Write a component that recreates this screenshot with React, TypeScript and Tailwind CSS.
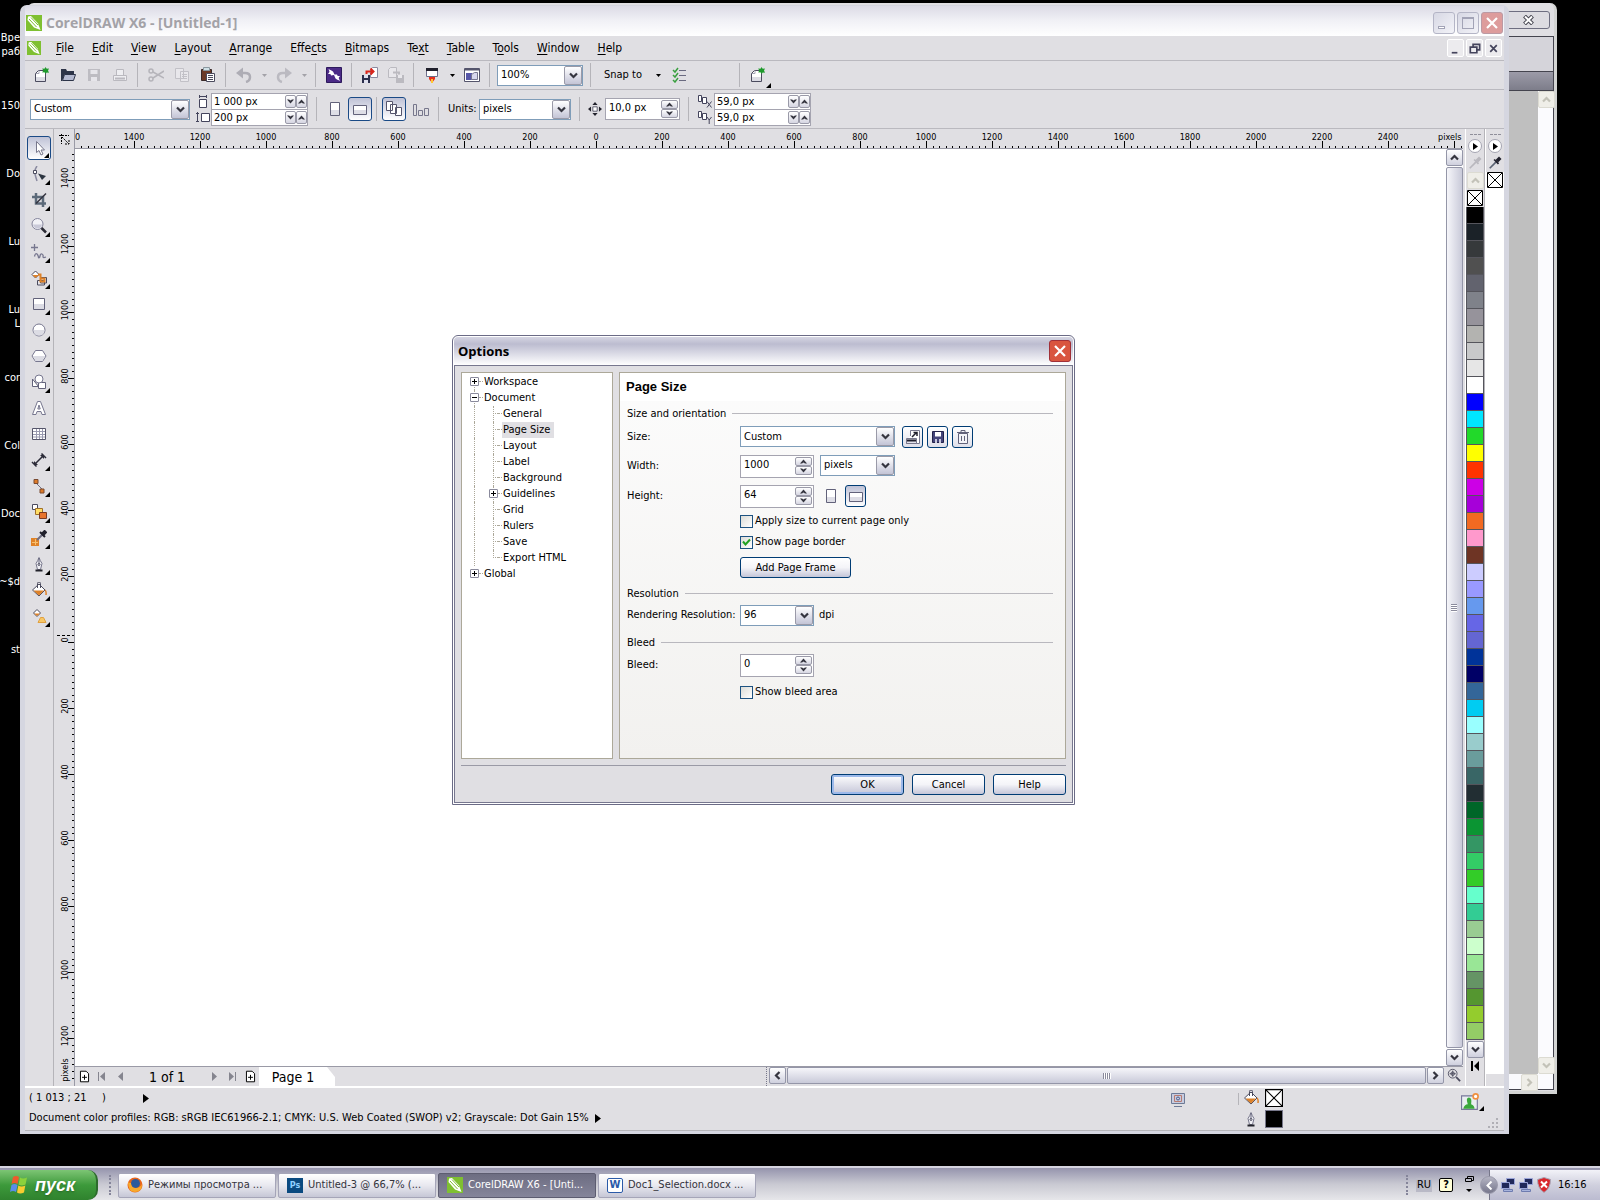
import { clsx } from "clsx";
import type { ReactNode } from "react";

const MENUS: [string, string, string][] = [
	["", "F", "ile"],
	["", "E", "dit"],
	["", "V", "iew"],
	["", "L", "ayout"],
	["", "A", "rrange"],
	["Effe", "c", "ts"],
	["", "B", "itmaps"],
	["Te", "x", "t"],
	["", "T", "able"],
	["T", "o", "ols"],
	["", "W", "indow"],
	["", "H", "elp"],
];

const PALETTE = [
	"#000000", "#1b2228", "#36393b", "#505050", "#62636e", "#7f828a", "#96939b",
	"#b3b3b0", "#c8c9ca", "#e6e6e6", "#ffffff", "#0000ff", "#00e6ff", "#22d92a",
	"#ffff00", "#ff3300", "#cc00e6", "#a600d9", "#f26a22", "#ff99cc", "#6e3424",
	"#ccccff", "#9999ff", "#6699ee", "#6666e6", "#6466d2", "#003399", "#000066",
	"#336699", "#00ccf2", "#99ffff", "#99cccc", "#6a9c9c", "#396666", "#222e33",
	"#006628", "#0b9533", "#349664", "#33cc66", "#33cc28", "#66ffcc", "#33cc94",
	"#99cc92", "#ccffcc", "#99e696", "#659465", "#559630", "#94cc2d", "#94cc66",
];

const DESKTOP_LABELS = [
	["Вре", "раб"],
	["150"],
	["Do"],
	["Lu"],
	["Lu", "L"],
	["cor"],
	["Col"],
	["Doc"],
	["~$d"],
	["st"],
];

const TREE = [
	{ label: "Workspace", level: 0, box: "+" },
	{ label: "Document", level: 0, box: "-" },
	{ label: "General", level: 1 },
	{ label: "Page Size", level: 1, selected: true },
	{ label: "Layout", level: 1 },
	{ label: "Label", level: 1 },
	{ label: "Background", level: 1 },
	{ label: "Guidelines", level: 1, box: "+" },
	{ label: "Grid", level: 1 },
	{ label: "Rulers", level: 1 },
	{ label: "Save", level: 1 },
	{ label: "Export HTML", level: 1 },
	{ label: "Global", level: 0, box: "+" },
];

const Icon = ({ children, size = 16 }: { children: ReactNode; size?: number }) => (
	<svg
		width={size}
		height={size}
		viewBox="0 0 16 16"
		fill="none"
		stroke="#4b4b5e"
		className="shrink-0"
		aria-hidden="true"
	>
		{children}
	</svg>
);

const Chevron = ({ dir = "down", muted = false }: { dir?: string; muted?: boolean }) => (
	<svg width="9" height="9" viewBox="0 0 9 9" fill="none" stroke={muted ? "#c3c2b8" : "#35353f"} strokeWidth="2.2" aria-hidden="true">
		{dir === "down" && <path d="M1 2.5l3.5 3.5L8 2.5" />}
		{dir === "up" && <path d="M1 6.5L4.5 3 8 6.5" />}
		{dir === "left" && <path d="M6.5 1L3 4.5 6.5 8" />}
		{dir === "right" && <path d="M2.5 1L6 4.5 2.5 8" />}
	</svg>
);

const Triangle = ({ dir }: { dir: "up" | "down" }) => (
	<svg width="7" height="5" viewBox="0 0 7 5" fill="#35353f" aria-hidden="true">
		<path d={dir === "up" ? "M0 4.5L3.5 .5 7 4.5H5L3.5 3.6 2 4.5z" : "M0 .5L3.5 4.5 7 .5H5L3.5 1.4 2 .5z"} />
	</svg>
);

const Combo = ({ id, label, value, className }: { id?: string; label?: string; value: string; className: string }) => (
	<div className={clsx("relative h-[21px] border border-[#7f9db9] bg-white", className)}>
		<select id={id} aria-label={label} className="block h-full w-full appearance-none bg-transparent pr-5 pl-[3px] outline-none">
			<option>{value}</option>
		</select>
		<span className="pointer-events-none absolute inset-y-0 right-0 flex w-[18px] items-center justify-center rounded-[2px] border border-[#9a9aa8] bg-linear-to-b from-white to-[#c3c4d6]">
			<Chevron />
		</span>
	</div>
);

const Spin = ({ id, label, value, className }: { id?: string; label?: string; value: string; className: string }) => (
	<div className={clsx("flex items-center border border-[#a5a4b0] bg-white pr-px", className)}>
		<input id={id} aria-label={label} defaultValue={value} className="h-full min-w-0 flex-1 pb-1 pl-[3px] outline-none" />
		<div className="flex flex-col">
			{(["up", "down"] as const).map((dir) => (
				<button
					key={dir}
					type="button"
					aria-label={dir}
					className="flex h-[9px] w-[17px] items-center justify-center rounded-[2px] border border-[#9a9aa8] bg-linear-to-b from-white to-[#d6d6e2]"
				>
					<Triangle dir={dir} />
				</button>
			))}
		</div>
	</div>
);

const FlatSpin = ({ label, value }: { label: string; value: string }) => (
	<div className="flex h-[17px] w-[97px] items-center border border-[#a5a4b0] bg-white">
		<input aria-label={label} defaultValue={value} className="h-full min-w-0 flex-1 pl-[2px] outline-none" />
		{(["down", "up"] as const).map((dir) => (
			<button
				key={dir}
				type="button"
				aria-label={dir}
				className="flex h-[13px] w-[11px] items-center justify-center rounded-[2px] border border-[#9a9aa8] bg-linear-to-b from-white to-[#d6d6e2]"
			>
				<Triangle dir={dir} />
			</button>
		))}
	</div>
);

const Sep = () => <div className="mr-[5px] ml-1 h-6 w-px shrink-0 bg-[#b5b4b9]" />;

const Tool = ({ label, children }: { label: string; children: ReactNode }) => (
	<button type="button" aria-label={label} className="flex h-[26px] w-[26px] shrink-0 items-center justify-center">
		{children}
	</button>
);

const Caret = ({ muted = false }: { muted?: boolean }) => (
	<button type="button" aria-label="More" className="flex h-6 w-[14px] shrink-0 items-center justify-center">
		<svg width="5" height="3" viewBox="0 0 5 3" fill={muted ? "#a3a2a8" : "#000"} aria-hidden="true">
			<path d="M0 0h5L2.5 3z" />
		</svg>
	</button>
);

const CorelLogo = ({ size }: { size: number }) => (
	<svg width={size} height={size} viewBox="0 0 16 16" className="shrink-0" aria-hidden="true">
		<path fill="#7fc031" d="M0 0h16v16H0z" />
		<path fill="#fff" d="M2 1.5l3-.5 7 7.5L14.5 15 8 12.500 1.500 5z" />
		<path stroke="#7fc031" strokeWidth="1" d="M3 4l7.500 8M5 2.500l7 7.500" />
	</svg>
);

const NewDoc = () => (
	<Icon>
		<path fill="#fff" d="M1.500 14.500V6.500l3-3h7v11z" />
		<path fill="#dcdce4" stroke="none" d="M2 10h9v4H2z" />
		<path stroke="#a5a5b4" d="M2 6.500h3v-3" />
		<path fill="#1f9a2c" stroke="none" d="M11.500 0l1.200 1.800L15 1.500l-1 2 1 2.200-2.300-.3L11.500 7l-1-1.800-2.300.3 1-2-1-2 2.300.3z" />
	</Icon>
);

const Portrait = ({ wide = false }: { wide?: boolean }) => (
	<Icon>
		{wide ? (
			<>
				<path fill="#fff" stroke="#62627a" d="M1.500 4.500h13v9h-13z" />
				<path fill="#dedee6" stroke="none" d="M2 9h12v4H2z" />
			</>
		) : (
			<>
				<path fill="#fff" stroke="#62627a" d="M3.500 1.500h9v13h-9z" />
				<path fill="#dedee6" stroke="none" d="M4 9h8v5H4z" />
			</>
		)}
	</Icon>
);

const Bucket = () => (
	<Icon>
		<path fill="#fff" d="M8 2l6 6-6 6-6.500-6z" />
		<path fill="#dd8128" stroke="none" d="M2.500 8.500h10.500L8 13.500z" />
		<path d="M6.500 6V1.500a1.500 1.500 0 013 0V6" />
		<path stroke="#dd8128" strokeWidth="1.500" d="M14 8q1.500 1 1 5" />
	</Icon>
);

const Pen = () => (
	<Icon>
		<path fill="#f1f1f6" stroke="#77778c" d="M8 1.500q-1 3-3 6l1.500 6h3l1.500-6q-2-3-3-6z" />
		<path stroke="#62627a" d="M8 2v6" />
		<circle cx="8" cy="8.500" r="1" />
		<path stroke="#22222b" strokeWidth="2" d="M4.500 14.500h7" />
	</Icon>
);

const Dropper = ({ muted = false }: { muted?: boolean }) => (
	<Icon size={14}>
		<path stroke={muted ? "#b9b8be" : "#5c6474"} strokeWidth="2" d="M2 14l7-7" />
		<path stroke={muted ? "#b9b8be" : "#20202c"} strokeWidth="4" d="M10 6l4-4" />
		<path stroke={muted ? "#b9b8be" : "#20202c"} strokeWidth="2" d="M7 4l5 5" />
	</Icon>
);

const TOOLBOX: { name: string; flyout?: boolean; icon: ReactNode }[] = [
	{ name: "Pick", flyout: true, icon: <path fill="#fff" stroke="#77778c" d="M5.500 1.500v11l2.500-2 2 4.500 2-1-2-4h3.500z" /> },
	{
		name: "Shape", flyout: true, icon: (
			<>
				<path stroke="#8a8aa0" strokeWidth="1.500" d="M6 0Q3 4 4 8t2 7" />
				<path fill="#fff" d="M2.500 4.500h3v3h-3z" />
				<path fill="#2c3440" stroke="none" d="M7 7.500l8 2.500-4 4z" />
			</>
		),
	},
	{
		name: "Crop", flyout: true, icon: (
			<>
				<path stroke="#5c6a7a" strokeWidth="2.500" d="M1 5h11v10M5 1v10.500h10" />
				<path stroke="#33333f" strokeWidth="1.500" d="M5 11.500L15 1.500" />
			</>
		),
	},
	{
		name: "Zoom", flyout: true, icon: (
			<>
				<circle cx="6.500" cy="6" r="5.500" fill="#f1f1f6" stroke="#85859c" />
				<path stroke="none" fill="#c9c9d8" d="M2 6.500h9q-1 4-4.500 4T2 6.500z" />
				<path stroke="#2b2b35" strokeWidth="2.500" d="M10.500 10l4.500 4.500" />
			</>
		),
	},
	{ name: "Freehand", flyout: true, icon: <path stroke="#77778f" strokeWidth="1.300" d="M3.500 0v7M0 3.500h7M3.500 12.500q1-4 2.500-2.500t1.500 3.500q1 1 1.500-1.500t2-2 1 3q.5 1 3 0" /> },
	{
		name: "Smart Fill", flyout: true, icon: (
			<>
				<path fill="#fff" d="M4.500 1l3.500 3.500-3.500 3.500L1 4.500z" />
				<path fill="#dd8128" stroke="none" d="M1.500 5h6.500l-3.500 3z" />
				<path fill="#e4e4ea" d="M6.500 10.500h7v4.500h-7zM9.500 7.500h6v5.500h-6z" />
				<path stroke="#dd8128" strokeWidth="2" d="M7 4.500h2.500v7h4v-3h-3" />
			</>
		),
	},
	{
		name: "Rectangle", flyout: true, icon: (
			<>
				<path fill="#fff" stroke="#62627a" d="M2.500 2.500h11v11h-11z" />
				<path fill="#dcdce4" stroke="none" d="M3 8h10v5H3z" />
			</>
		),
	},
	{
		name: "Ellipse", flyout: true, icon: (
			<>
				<circle cx="8" cy="8" r="6" fill="#fff" stroke="#77778f" />
				<path fill="#dcdce4" stroke="none" d="M2.500 8h11q0 5.500-5.500 5.500T2.500 8z" />
			</>
		),
	},
	{
		name: "Polygon", flyout: true, icon: (
			<>
				<path fill="#fff" stroke="#77778f" d="M4.500 2.500h7L15 8l-3.500 5.500h-7L1 8z" />
				<path fill="#dcdce4" stroke="none" d="M1.800 8h12.400l-3 5h-6.400z" />
			</>
		),
	},
	{
		name: "Basic Shapes", flyout: true, icon: (
			<>
				<path fill="#fff" stroke="#62627a" d="M1.500 5v7.500h6zM7.500 8.500h7v6h-7z" />
				<circle cx="8" cy="5" r="4" fill="#fff" stroke="#77778f" />
			</>
		),
	},
	{ name: "Text", icon: <path fill="#fff" stroke="#77778f" d="M6.500 1.500h3l5 13h-3.500l-1-3h-4l-1 3H1.500zM8 5l-1.200 4h2.400z" /> },
	{
		name: "Table", icon: (
			<>
				<path fill="#fff" stroke="#55556a" d="M1.500 2.500h13v11h-13z" />
				<path stroke="#9a9ab0" d="M2 5.500h12M2 8.500h12M2 11h12M5.500 3v10M8.500 3v10M11.500 3v10" />
			</>
		),
	},
	{
		name: "Dimension", flyout: true, icon: (
			<>
				<path stroke="#2b2b38" strokeWidth="1.500" d="M4 12L12 4M1 10l4.500 4.500M10.500 1.500L15 6" />
				<path fill="#2b2b38" stroke="none" d="M3 13V9l4 4zM13 3v4L9 3z" />
			</>
		),
	},
	{
		name: "Connector", flyout: true, icon: (
			<>
				<path stroke="#6e6e84" d="M4 4l8 8" />
				<path fill="#dd7a28" stroke="#7a4a30" d="M3 1.500h4v4H3zM9 11h4v4H9z" />
			</>
		),
	},
	{
		name: "Blend", flyout: true, icon: (
			<>
				<path fill="#fff" d="M1.500.500h5v5h-5z" />
				<path fill="#ffdd66" stroke="#a07028" d="M4.500 4.500h7v6h-7z" />
				<path fill="#e8742c" stroke="#7a3a20" d="M8.500 8.500h7v6h-7z" />
			</>
		),
	},
	{
		name: "Eyedropper", flyout: true, icon: (
			<>
				<path fill="#e08328" stroke="none" d="M0 8h8v8H0z" />
				<path stroke="#f8c070" d="M1 12.500h6M4.500 9v6" />
				<path stroke="#6e6e84" strokeWidth="2" d="M6 10l5-5" />
				<path stroke="#20202c" strokeWidth="4" d="M11 5l4-4" />
				<path stroke="#20202c" strokeWidth="2" d="M9 2l5 5" />
			</>
		),
	},
	{ name: "Outline Pen", flyout: true, icon: <Pen /> },
	{ name: "Fill", flyout: true, icon: <Bucket /> },
	{
		name: "Interactive Fill", flyout: true, icon: (
			<>
				<path fill="#fff" d="M6 1.500L9.500 5 6 8.500 2.500 5z" />
				<path fill="#dd8128" stroke="none" d="M3 5.500h6L6 8z" />
				<path fill="#f7c766" stroke="#e0a040" d="M9.500 9.500h3l2.500 5H7z" />
			</>
		),
	},
];

// 200 document units take 66px on screen
const STEP = 6.6;

const HorizontalRuler = () => {
	const origin = 521;
	const ticks = Array.from({ length: 400 }, (_, i) => i - 78);
	return (
		<svg width="100%" height="20" className="block shrink-0 overflow-hidden border-b border-[#9a9aa6] text-[9px]" aria-label="Horizontal ruler">
			{ticks.map((i) => {
				const x = Math.round(origin + i * STEP);
				if (x > 1386) return null;
				return <path key={i} stroke="#000" shapeRendering="crispEdges" d={`M${x}.5 ${i % 10 === 0 ? 12 : 17}V19`} />;
			})}
			<text x="0" y="11">0</text>
			{ticks
				.filter((i) => i % 10 === 0 && i >= -70 && i <= 120)
				.map((i) => (
					<text key={i} x={origin + i * STEP} y="11" textAnchor="middle">
						{Math.abs(i) * 20}
					</text>
				))}
			<text x="1363" y="11">pixels</text>
		</svg>
	);
};

const VerticalRuler = () => {
	const origin = 493;
	const ticks = Array.from({ length: 141 }, (_, i) => i - 74);
	return (
		<svg width="20" height="100%" className="absolute inset-0 text-[9px]" aria-label="Vertical ruler">
			{ticks.map((i) => {
				const y = Math.round(origin + i * STEP);
				return <path key={i} stroke="#000" shapeRendering="crispEdges" d={`M${i % 10 === 0 ? 14 : 18} ${y}.5H20`} />;
			})}
			<path stroke="#000" strokeDasharray="3 2" shapeRendering="crispEdges" d="M3 486.500h17" />
			{ticks
				.filter((i) => i % 10 === 0 && i >= -70 && i <= 60)
				.map((i) => {
					const y = origin - 2 + i * STEP;
					return (
						<text key={i} x="14" y={y} textAnchor="middle" transform={`rotate(-90 14 ${y})`}>
							{Math.abs(i) * 20}
						</text>
					);
				})}
			<text x="14" y="921" textAnchor="middle" transform="rotate(-90 14 921)">pixels</text>
		</svg>
	);
};

const ScrollButton = ({ dir, muted = false }: { dir: string; muted?: boolean }) => (
	<button
		type="button"
		aria-label={`Scroll ${dir}`}
		className={clsx(
			"flex h-[17px] w-[17px] shrink-0 items-center justify-center rounded-[2px] border",
			muted ? "border-[#dcdbd2] bg-[#efeee8]" : "border-[#9496a8] bg-linear-to-b from-white to-[#cfd0de]",
		)}
	>
		<Chevron dir={dir} muted={muted} />
	</button>
);

const NoColor = ({ size = 16 }: { size?: number }) => (
	<svg width={size} height={size} viewBox="0 0 16 16" className="shrink-0 bg-white" aria-hidden="true">
		<path fill="none" stroke="#000" d="M.500.500h15v15H.500zM1 1l14 14M15 1L1 15" />
	</svg>
);

const PaletteHead = ({ muted = false }: { muted?: boolean }) => (
	<>
		<div className="mt-[5px] w-[11px] border-t border-dashed border-[#8f8f9a]" />
		<button type="button" aria-label="Palette menu" className="mt-1 flex h-[14px] w-[14px] items-center justify-center rounded-full border border-[#a5a5b2] bg-white">
			<svg width="5" height="7" viewBox="0 0 5 7" aria-hidden="true">
				<path d="M0 0l5 3.500L0 7z" />
			</svg>
		</button>
		<div className="mt-[3px]">
			<Dropper muted={muted} />
		</div>
	</>
);

const TitleBar = () => (
	<header className="flex h-[30px] shrink-0 items-center bg-linear-to-b from-[#dcdbe6] via-[#f1f1f6] to-white pt-[3px] pr-px pl-[1px]">
		<CorelLogo size={16} />
		<h1 className="ml-1 flex-1 font-['Open_Sans','Noto_Sans',sans-serif] text-[14px] font-bold text-[#a3a2a7]">
			CorelDRAW X6 - [Untitled-1]
		</h1>
		<div className="flex gap-[2px]">
			<button type="button" aria-label="Minimize" className="flex h-[22px] w-[22px] rounded-[3px] border border-[#b4b5c6] bg-linear-to-br from-[#d7d8e4] to-[#f3f3f8]">
				<span className="mt-[13px] ml-1 h-[3px] w-[7px] border border-[#a2a3b6] bg-white" />
			</button>
			<button type="button" aria-label="Maximize" className="flex h-[22px] w-[22px] items-center justify-center rounded-[3px] border border-[#b4b5c6] bg-linear-to-br from-[#d7d8e4] to-[#f3f3f8]">
				<span className="h-3 w-3 border border-t-2 border-[#a2a3b6]" />
			</button>
			<button type="button" aria-label="Close" className="flex h-[22px] w-[22px] items-center justify-center rounded-[3px] border border-[#bb9aa4] bg-[#dd9c9c]">
				<svg width="12" height="12" viewBox="0 0 12 12" stroke="#fff" strokeWidth="2.200" aria-hidden="true">
					<path d="M1 1l10 10M11 1L1 11" />
				</svg>
			</button>
		</div>
	</header>
);

const MenuBar = () => (
	<nav className="flex h-[25px] shrink-0 items-center border-b border-[#bab9bf] pr-[2px] pl-[2px] text-[12px]">
		<CorelLogo size={14} />
		<div className="ml-[6px] flex flex-1">
			{MENUS.map(([before, key, after]) => (
				<button key={before + key + after} type="button" className="px-[9px]">
					{before}
					<span className="underline underline-offset-2">{key}</span>
					{after}
				</button>
			))}
		</div>
		<div className="flex gap-[2px]">
			{["M4 12.500h6", "M6.500 6.500v-3h7v6h-3M3.500 6.500h7v6h-7z", "M4.500 4.500l7 7M11.500 4.500l-7 7"].map((d) => (
				<button key={d} type="button" aria-label="Document window" className="flex h-[18px] w-[17px] items-center justify-center rounded-[2px] border border-white bg-[#ecebee]">
					<Icon size={15}>
						<path stroke="#44445c" strokeWidth="1.800" d={d} />
					</Icon>
				</button>
			))}
		</div>
	</nav>
);

const StandardToolbar = () => (
	<div className="flex h-[29px] shrink-0 items-center border-b border-[#bab9bf] pl-1">
		<Tool label="New"><NewDoc /></Tool>
		<Tool label="Open">
			<Icon>
				<path fill="#2d3448" stroke="none" d="M1 2h5l1 2h7v3H5L2 14H1z" />
				<path fill="#b4b9d0" stroke="#2d3448" d="M4.500 7.500h11l-2 6h-11z" />
			</Icon>
		</Tool>
		<Tool label="Save">
			<Icon>
				<path fill="#bdbcc2" stroke="none" d="M2 2h12v12H2z" />
				<path fill="#e6e5ea" stroke="none" d="M4.500 3h7v4h-7zM5 10h6v4H5z" />
			</Icon>
		</Tool>
		<Tool label="Print">
			<Icon>
				<path stroke="#bab9bf" fill="#eeeef1" d="M4.500 8V2.500h7V8M1.500 8.500h13v5h-13z" />
				<path stroke="#bab9bf" strokeWidth="2" d="M3 11.500h10" />
			</Icon>
		</Tool>
		<Sep />
		<Tool label="Cut">
			<Icon>
				<path stroke="#b5b4ba" strokeWidth="1.500" d="M5 5l11 6M5 11l11-7" />
				<circle cx="3" cy="4" r="2" stroke="#b5b4ba" strokeWidth="1.500" />
				<circle cx="3" cy="12" r="2" stroke="#b5b4ba" strokeWidth="1.500" />
			</Icon>
		</Tool>
		<Tool label="Copy">
			<Icon>
				<path stroke="#c2c1c7" fill="#e8e7eb" d="M1.500 1.500h8v10h-8zM6.500 4.500h8v10h-8z" />
				<path stroke="#c2c1c7" d="M8 7.500h5M8 9.500h5M8 11.500h5" />
			</Icon>
		</Tool>
		<Tool label="Paste">
			<Icon>
				<path fill="#6b3a28" stroke="#3a2a2a" d="M1.500 2.500h10v11h-10z" />
				<path fill="#cfe0e6" stroke="#8a98a0" d="M3.500.500h6v3h-6z" />
				<path fill="#fff" d="M6.500 6.500h8v8h-8z" />
				<path d="M8 8.500h5M8 10.500h5M8 12.500h5" />
			</Icon>
		</Tool>
		<Sep />
		<Tool label="Undo">
			<Icon>
				<path stroke="#aeadb5" strokeWidth="2.500" d="M3 6h6q5 0 5 4t-4 5" />
				<path fill="#aeadb5" stroke="none" d="M0 6l7-5.500v11z" />
			</Icon>
		</Tool>
		<Caret muted />
		<Tool label="Redo">
			<Icon>
				<path stroke="#bbbac1" strokeWidth="2.500" d="M13 6H7q-5 0-5 4t4 5" />
				<path fill="#bbbac1" stroke="none" d="M16 6L9 .500v11z" />
			</Icon>
		</Tool>
		<Caret muted />
		<Sep />
		<Tool label="Connect">
			<Icon>
				<path fill="#4b2a86" stroke="#2d1a5c" d="M.500.500h15v15H.500z" />
				<path fill="#fff" stroke="none" d="M2.500 2l4.500 2.500 1.500 3 2.500 0 3 6.500-4.500-2.500-1.500-3.500-3 .5z" />
				<path fill="#fff" stroke="none" d="M2 7l4 0-1-4zM14 9l-4 0 1 4z" />
			</Icon>
		</Tool>
		<Sep />
		<Tool label="Import">
			<Icon>
				<path fill="#fff" stroke="#8a8aa0" d="M8.500 10.500v-8l2-2h5v10z" />
				<path fill="#2b2f4c" stroke="none" d="M0 8h8v8H0z" />
				<path fill="#dfe0ee" stroke="none" d="M2 8h4v3H2zM2 13h4v3H2z" />
				<path stroke="#d8261c" strokeWidth="2" d="M4.500 7V4.500H11M8.500 1.500l3 3-3 3" />
			</Icon>
		</Tool>
		<Tool label="Export">
			<Icon>
				<path fill="#e8e7eb" stroke="#bbbac0" d="M.500 10.500v-8l2-2h6v10z" />
				<path fill="#bbbac0" stroke="none" d="M8 8h8v8H8z" />
				<path fill="#e8e7eb" stroke="none" d="M10 8h4v3h-4z" />
				<path stroke="#bbbac0" strokeWidth="2" d="M5 5.500h6v2" />
			</Icon>
		</Tool>
		<Sep />
		<Tool label="Publish">
			<Icon>
				<path fill="#fff" stroke="#6e6e8a" d="M2.500 1.500h11v8h-11z" />
				<path stroke="#20202c" strokeWidth="3" d="M2 2.500h12" />
				<path fill="#e8321c" stroke="none" d="M5 10h6v2l-3 4-3-4z" />
				<path fill="#ffc832" stroke="none" d="M7 12h2v4H7z" />
			</Icon>
		</Tool>
		<Caret />
		<Tool label="Welcome screen">
			<Icon>
				<path fill="#fff" stroke="#55556c" d="M.500 1.500h15v13H.500z" />
				<path stroke="#55556c" strokeWidth="2" d="M1 2.500h14" />
				<path fill="#5656a8" stroke="none" d="M2 6h6v7H2z" />
				<path fill="#d8d8ee" stroke="#77778f" d="M7.500 7.500l3-2h3v7h-6z" />
			</Icon>
		</Tool>
		<Sep />
		<Combo label="Zoom levels" value="100%" className="ml-[2px] w-[86px]" />
		<div className="ml-[3px]"><Sep /></div>
		<button type="button" className="ml-1 h-6 px-1">Snap to</button>
		<div className="ml-[6px]"><Caret /></div>
		<Tool label="Snap options">
			<Icon>
				<path stroke="#6a6a80" d="M8 3.500h7M8 8.500h7M8 13.500h7" />
				<path stroke="#3aa040" strokeWidth="1.500" d="M2 3l2 2 3-4M2 8l2 2 3-4M2 13l2 2 3-4" />
			</Icon>
		</Tool>
		<div className="ml-[43px]"><Sep /></div>
		<div className="relative">
			<Tool label="New from template"><NewDoc /></Tool>
			<svg width="5" height="5" className="absolute right-0 bottom-0" aria-hidden="true"><path d="M5 0v5H0z" /></svg>
		</div>
	</div>
);

const PROP_BUTTON = "flex h-6 w-6 shrink-0 items-center justify-center rounded-[3px] border border-[#1a4a86] bg-linear-to-b from-[#bfc2d6] to-white";

const DupIcon = ({ axis }: { axis: string }) => (
	<svg width="14" height="13" viewBox="0 0 14 13" fill="#fff" stroke="#44445c" aria-hidden="true">
		<path d="M.500.500h3v6h-3zM4.500 2.500h4v6h-4z" />
		<path fill="none" d={axis === "x" ? "M9 6.500l4.500 6M13.500 6.500l-4.500 6" : "M9 6l2.200 3L13.500 6M11.200 9v4"} />
	</svg>
);

const PropertyBar = () => (
	<div className="flex h-[39px] shrink-0 items-center border-b border-[#bab9bf] pl-[5px]">
		<Combo label="Paper type" value="Custom" className="w-[160px]" />
		<div className="ml-[6px] flex w-[14px] flex-col gap-[3px]">
			<svg width="14" height="13" viewBox="0 0 14 13" fill="#fff" stroke="#44445c" aria-hidden="true">
				<path d="M3.500 4.500h7v8h-7zM3.500 1.500h7M3.500 0v3M10.500 0v3" />
			</svg>
			<svg width="14" height="12" viewBox="0 0 14 12" fill="#fff" stroke="#44445c" aria-hidden="true">
				<path d="M5.500 2.500h8v8h-8zM1.500 1v10M0 2.500h3M0 10.500h3" />
			</svg>
		</div>
		<div className="ml-px flex flex-col -space-y-px">
			<FlatSpin label="Page width" value="1 000 px" />
			<FlatSpin label="Page height" value="200 px" />
		</div>
		<div className="ml-1"><Sep /></div>
		<Tool label="Portrait"><Portrait /></Tool>
		<button type="button" aria-label="Landscape" className={PROP_BUTTON}><Portrait wide /></button>
		<Sep />
		<button type="button" aria-label="All pages" className={PROP_BUTTON}>
			<Icon>
				<path fill="#fff" stroke="#55556c" d="M.500.500h6v9h-6zM4.500 3.500h6v9h-6zM9.500 6.500h6v8h-6z" />
			</Icon>
		</button>
		<div className="ml-[2px]">
			<Tool label="Current page">
				<Icon>
					<path stroke="#77778c" d="M.500 3.500h3v11h-3zM5.500 9.500h4v5h-4zM11.500 7.500h4v7h-4z" />
				</Icon>
			</Tool>
		</div>
		<Sep />
		<label htmlFor="units" className="ml-1 w-[31px]">Units:</label>
		<Combo id="units" value="pixels" className="w-[92px]" />
		<div className="ml-1"><Sep /></div>
		<div className="mx-[3px]">
			<Icon size={14}>
				<path d="M5.500 5.500h5v5h-5z" fill="#fff" />
				<path fill="#22222c" stroke="none" d="M8 0l3 3.500H5zM8 16l3-3.500H5zM0 8l3.500-3v6zM16 8l-3.500-3v6z" />
			</Icon>
		</div>
		<Spin label="Nudge distance" value="10,0 px" className="h-[22px] w-[75px]" />
		<div className="ml-1"><Sep /></div>
		<div className="ml-[4px] flex w-[16px] flex-col gap-[3px]">
			<DupIcon axis="x" />
			<DupIcon axis="y" />
		</div>
		<div className="flex flex-col -space-y-px">
			<FlatSpin label="Duplicate distance x" value="59,0 px" />
			<FlatSpin label="Duplicate distance y" value="59,0 px" />
		</div>
	</div>
);

const PAGE_NAV = "flex h-[18px] w-[18px] items-center justify-center";

const PageBar = () => (
	<div className="flex h-5 shrink-0 border-t border-[#9a9aa6]">
		<div className="flex w-[688px] items-center">
			<button type="button" aria-label="Add page before" className={PAGE_NAV}>
				<Icon size={13}><path fill="#fff" stroke="#000" strokeWidth="1.200" d="M3 1.500h7l3 3v10H3zM5 9h6M8 6v6" /></Icon>
			</button>
			<button type="button" aria-label="First page" className={PAGE_NAV}>
				<svg width="8" height="9" fill="#85858f" aria-hidden="true"><path d="M0 0h1v9H0zM7 0v9L2 4.500z" /></svg>
			</button>
			<button type="button" aria-label="Previous page" className={PAGE_NAV}>
				<svg width="5" height="9" fill="#85858f" aria-hidden="true"><path d="M5 0v9L0 4.500z" /></svg>
			</button>
			<span className="w-[76px] text-center text-[14px]">1 of 1</span>
			<button type="button" aria-label="Next page" className={PAGE_NAV}>
				<svg width="5" height="9" fill="#85858f" aria-hidden="true"><path d="M0 0v9l5-4.500z" /></svg>
			</button>
			<button type="button" aria-label="Last page" className={PAGE_NAV}>
				<svg width="8" height="9" fill="#85858f" aria-hidden="true"><path d="M7 0h1v9H7zM1 0v9l5-4.500z" /></svg>
			</button>
			<button type="button" aria-label="Add page after" className={PAGE_NAV}>
				<Icon size={13}><path fill="#fff" stroke="#000" strokeWidth="1.200" d="M3 1.500h7l3 3v10H3zM5 9h6M8 6v6" /></Icon>
			</button>
			<button type="button" className="h-full w-[76px] bg-white pr-2 text-center text-[14px] leading-[18px] [clip-path:polygon(0_0,68px_0,100%_10px,100%_100%,0_100%)]">
				Page 1
			</button>
		</div>
		<div className="mr-[2px] w-1 border-r border-dotted border-[#77778a]" />
		<ScrollButton dir="left" />
		<div className="mx-px flex h-[17px] flex-1 items-center justify-center rounded-[2px] border border-[#9496a8] bg-linear-to-b from-[#f6f6fa] to-[#c9cad9]">
			<span className="h-[6px] w-2 bg-[repeating-linear-gradient(90deg,#8a8a9c_0_1px,#fff_1px_2px)]" />
		</div>
		<ScrollButton dir="right" />
		<div className="flex w-[19px] justify-center pt-px">
			<Icon size={14}>
				<circle cx="6.500" cy="6.500" r="5" />
				<circle cx="6.500" cy="6.500" r="2" />
				<path d="M6.500 3v7M3 6.500h7" />
				<path strokeWidth="2" d="M10.500 10.500l4.500 4.500" />
			</Icon>
		</div>
	</div>
);

const StatusBar = () => (
	<footer className="flex h-[45px] shrink-0 border-t-2 border-b border-white border-b-[#b5b4b9]">
		<div className="flex-1 pl-1">
			<p className="flex h-5 items-center">
				<span className="w-[73px]">( 1 013 ; 21</span>
				<span className="w-[41px]">)</span>
				<svg width="6" height="9" aria-hidden="true"><path d="M0 0v9l6-4.500z" /></svg>
			</p>
			<p className="flex h-5 items-center gap-[6px]">
				Document color profiles: RGB: sRGB IEC61966-2.1; CMYK: U.S. Web Coated (SWOP) v2; Grayscale: Dot Gain 15%
				<svg width="6" height="9" aria-hidden="true"><path d="M0 0v9l6-4.500z" /></svg>
			</p>
		</div>
		<div className="w-[68px] pt-1">
			<Icon>
				<path fill="#c7cce0" stroke="#6d7a96" d="M1.500 1.500h13v10h-13z" />
				<path stroke="#b87a70" d="M4.500 3.500h7v6h-7z" />
				<circle cx="8" cy="6.500" r="1.500" stroke="#4a5a8a" />
				<path stroke="#6d7a96" d="M4 14.500h8" />
			</Icon>
		</div>
		<div className="mt-[5px] h-3 w-[5px] border-l border-[#b5b4b9]" />
		<div className="flex flex-col gap-[5px] pt-[2px]">
			<Bucket />
			<Pen />
		</div>
		<div className="ml-[6px] flex w-[196px] flex-col gap-[3px] pt-px">
			<NoColor size={18} />
			<span className="h-[18px] w-[18px] border border-[#77778a] bg-black" />
		</div>
		<div className="relative flex w-[43px] items-start pt-[5px]">
			<Icon size={18}>
				<path fill="#e8eef0" stroke="#77779a" d="M.500 2.500h14v12H.500z" />
				<path fill="#3aa83c" stroke="none" d="M2 14q1-4 4-4-2-6 1-6t2 6q3 1 3 4z" />
				<circle cx="13" cy="3" r="2.200" fill="#fff" stroke="#f09040" strokeWidth="1.500" />
			</Icon>
			<svg width="5" height="5" className="mt-[13px]" aria-hidden="true"><path d="M5 0v5H0z" /></svg>
			<svg width="12" height="12" className="absolute right-1 bottom-0" fill="#b0afb5" aria-hidden="true">
				<path d="M8 0h2v2H8zM4 4h2v2H4zM8 4h2v2H8zM0 8h2v2H0zM4 8h2v2H4zM8 8h2v2H8z" />
			</svg>
		</div>
	</footer>
);

const OptionsTree = () => (
	<ul className="w-[152px] shrink-0 border border-[#aca899] bg-white pt-px pl-2">
		{TREE.map(({ label, level, box, selected }, i) => (
			<li key={label} className="relative flex h-4 items-center">
				{/* dotted guide lines */}
				{i < TREE.length - 1 && <span className={clsx("absolute left-1 border-l border-dotted border-[#aca899]", i === 0 ? "top-2 h-2" : "h-4")} />}
				{level === 1 && <span className={clsx("absolute top-0 left-[23px] border-l border-dotted border-[#aca899]", label === "Export HTML" ? "h-2" : "h-4")} />}
				{level === 1 && <span className="w-[19px]" />}
				<span className="relative flex h-[9px] w-[9px] items-center justify-center">
					{box ? (
						<svg width="9" height="9" fill="#fff" stroke="#8a8a9c" className="rounded-[1px]" aria-hidden="true">
							<path d="M.5.5h8v8h-8z" />
							<path stroke="#000" d={box === "+" ? "M2 4.5h5M4.5 2v5" : "M2 4.5h5"} />
						</svg>
					) : (
						<span className="ml-1 w-full border-t border-dotted border-[#aca899]" />
					)}
				</span>
				<span className="w-1 border-t border-dotted border-[#aca899]" />
				<button type="button" className={clsx("h-4 pr-1 pl-px whitespace-nowrap", selected && "bg-[#e0dfe3]")}>
					{label}
				</button>
			</li>
		))}
	</ul>
);

const GroupTitle = ({ children }: { children: string }) => (
	<h3 className="mr-3 flex h-4 items-center gap-[6px]">
		{children}
		<span className="h-px flex-1 bg-[#b9b8be]" />
	</h3>
);

const Check = ({ id, label, checked = false }: { id: string; label: string; checked?: boolean }) => (
	<div className="ml-[113px] flex h-[21px] items-center gap-[2px]">
		<span className="relative h-[13px] w-[13px]">
			<input
				id={id}
				type="checkbox"
				defaultChecked={checked}
				className="peer block h-[13px] w-[13px] appearance-none border border-[#1d5281] bg-linear-to-br from-[#dcdcd7] to-white"
			/>
			<svg width="9" height="9" className="pointer-events-none absolute top-[2px] left-[2px] hidden peer-checked:block" fill="none" stroke="#21a121" strokeWidth="2" aria-hidden="true">
				<path d="M1 3.500l2.500 3L8 1.500" />
			</svg>
		</span>
		<label htmlFor={id}>{label}</label>
	</div>
);

const PUSH = "h-[21px] rounded-[3px] border border-[#003c74] bg-linear-to-b from-white via-[#f4f4f8] to-[#c5c6d8] pt-px";
const ICON_PUSH = "flex h-[22px] w-[21px] items-center justify-center rounded-[3px] border border-[#003c74] bg-linear-to-b from-white to-[#dfe0ea]";

const OptionsDialog = () => (
	<section
		role="dialog"
		aria-label="Options"
		className="flex h-[470px] w-[623px] flex-col rounded-t-[6px] border border-[#6b6b86] bg-white p-px"
	>
		<header className="flex h-[28px] shrink-0 items-center rounded-t-[4px] bg-linear-to-b from-[#d5d5e2] via-[#bcbcd0] via-25% to-white pt-px pr-[2px] pl-1">
			<h2 className="flex-1 font-['Open_Sans','Noto_Sans',sans-serif] text-[13px] font-bold">Options</h2>
			<button type="button" aria-label="Close" className="flex h-[22px] w-[22px] items-center justify-center rounded-[3px] border border-[#a03038] bg-[#d9553f]">
				<svg width="12" height="12" viewBox="0 0 12 12" stroke="#fff" strokeWidth="2.200" aria-hidden="true">
					<path d="M1 1l10 10M11 1L1 11" />
				</svg>
			</button>
		</header>
		<div className="flex flex-1 flex-col border border-[#77778f] bg-[#e0dfe3] px-[6px]">
			<div className="mt-[6px] flex flex-1 gap-[6px]">
				<OptionsTree />
				<div className="flex-1 border border-[#aca899] bg-linear-to-b from-[#fcfcfc] to-[#f2f1ef]">
					<h2 className="flex h-[28px] items-center bg-white pt-px pl-[6px] font-['Liberation_Sans',Arial,sans-serif] text-[13px] font-bold">
						Page Size
					</h2>
					<form className="pt-[5px] pl-[7px]" onSubmit={(e) => e.preventDefault()}>
						<GroupTitle>Size and orientation</GroupTitle>
						<div className="mt-1 flex h-[22px] items-center">
							<label htmlFor="size" className="w-[113px]">Size:</label>
							<Combo id="size" value="Custom" className="w-[155px]" />
							<div className="ml-[7px] flex gap-1">
								<button type="button" aria-label="Page size from printer" className={ICON_PUSH}>
									<Icon>
										<path fill="#fff" stroke="#77778c" d="M5.500 7V1.500h9v13h-13v-4.500" />
										<path fill="#e4e4ee" stroke="#77778c" d="M1.500 9.500h10v5h-10z" />
										<path stroke="#20202c" strokeWidth="2" d="M2 11.500h9" />
										<path stroke="#20202c" strokeWidth="1.500" d="M7 8l4.500-4.500M8.500 3.500H12v3.500" />
									</Icon>
								</button>
								<button type="button" aria-label="Save custom page size" className={ICON_PUSH}>
									<Icon>
										<path fill="#44447a" stroke="#22224a" d="M2.500 2.500h11v11h-11z" />
										<path fill="#fff" stroke="none" d="M5 3h6v4.500H5z" />
										<path fill="#c8c8dc" stroke="none" d="M5 10h2v4H5zM9 10h2v4H9z" />
									</Icon>
								</button>
								<button type="button" aria-label="Delete custom page size" className={ICON_PUSH}>
									<Icon>
										<path fill="#f3f3f8" stroke="#62627a" d="M3.500 4.500h9v10h-9zM2 3.500h12M6 3.500v-2h4v2M6.500 7v5M9.500 7v5" />
									</Icon>
								</button>
							</div>
						</div>
						<div className="mt-[7px] flex h-[23px]">
							<label htmlFor="width" className="w-[113px] leading-[21px]">Width:</label>
							<Spin id="width" value="1000" className="w-[74px]" />
							<Combo label="Width units" value="pixels" className="ml-[6px] w-[75px]" />
						</div>
						<div className="mt-[7px] flex h-[23px]">
							<label htmlFor="height" className="w-[113px] leading-[21px]">Height:</label>
							<Spin id="height" value="64" className="w-[74px]" />
							<button type="button" aria-label="Portrait page" className="mr-[5px] ml-2 flex w-[18px] items-center justify-center">
								<Portrait />
							</button>
							<button type="button" aria-label="Landscape page" className="flex h-[22px] w-[21px] items-center justify-center rounded-[3px] border border-[#003c74] bg-linear-to-b from-[#bfc2d6] to-white">
								<Portrait wide />
							</button>
						</div>
						<div className="mt-[3px]">
							<Check id="apply" label="Apply size to current page only" />
							<Check id="border" label="Show page border" checked />
						</div>
						<button type="button" className={clsx(PUSH, "mt-1 ml-[113px] block w-[111px]")}>Add Page Frame</button>
						<div className="mt-2">
							<GroupTitle>Resolution</GroupTitle>
						</div>
						<div className="mt-[3px] flex h-[21px] items-center">
							<label htmlFor="dpi" className="w-[113px] whitespace-nowrap">Rendering Resolution:</label>
							<Combo id="dpi" value="96" className="w-[74px]" />
							<span className="ml-[5px]">dpi</span>
						</div>
						<div className="mt-[9px]">
							<GroupTitle>Bleed</GroupTitle>
						</div>
						<div className="mt-[3px] flex h-[23px]">
							<label htmlFor="bleed" className="w-[113px] leading-[21px]">Bleed:</label>
							<Spin id="bleed" value="0" className="w-[74px]" />
						</div>
						<div className="mt-[5px]">
							<Check id="bleedArea" label="Show bleed area" />
						</div>
					</form>
				</div>
			</div>
			<div className="mt-[6px] flex h-[37px] shrink-0 justify-end gap-2 border-t border-[#9a9aa6] pt-2">
				<button type="button" className="h-[21px] w-[73px] rounded-[3px] border border-[#003c74] bg-linear-to-b from-white to-[#c5c6d8] pt-px inset-ring-2 inset-ring-[#9cb9ea]">
					OK
				</button>
				<button type="button" className={clsx(PUSH, "w-[73px]")}>Cancel</button>
				<button type="button" className={clsx(PUSH, "w-[73px]")}>Help</button>
			</div>
		</div>
	</section>
);

const BackWindow = () => (
	<section className="absolute top-[3px] right-[43px] bottom-[106px] left-[27px] flex flex-col items-stretch rounded-t-[7px] border-r-[3px] border-b-[3px] border-[#d3d4d3] bg-[#e0dfe3] pb-px">
		<div className="flex h-[33px] shrink-0 items-center justify-end pr-1">
			<button type="button" aria-label="Close" className="flex h-[18px] w-[60px] items-center justify-center rounded-[3px] border border-[#6e6e80] bg-[#dddce1] pl-4">
				<svg width="11" height="10" viewBox="0 0 11 10" aria-hidden="true">
					<path stroke="#44444e" strokeWidth="4" d="M1.500 1l8 8M9.500 1l-8 8" />
					<path stroke="#fff" strokeWidth="2" d="M2 1.500l7 7M9 1.500l-7 7" />
				</svg>
			</button>
		</div>
		<div className="flex flex-1 flex-col border-t border-r border-b border-[#44444e]">
			<div className="h-[34px] shrink-0 bg-[#d5d4da]" />
			<div className="h-[20px] shrink-0 border-y border-[#44444e] bg-linear-to-b from-[#9c9ba8] to-[#7d7d8a]" />
			<div className="flex flex-1 bg-[#bfbfbf]">
				<div className="flex flex-1 flex-col justify-end">
					<div className="flex h-[15px] justify-end bg-[#fafafd]"><ScrollButton dir="right" muted /></div>
				</div>
				<div className="flex w-[15px] flex-col justify-between bg-[#fbfbfe] pb-[15px]">
					<ScrollButton dir="up" muted />
					<ScrollButton dir="down" muted />
				</div>
			</div>
		</div>
	</section>
);

const TASK = "flex h-[25px] w-[158px] items-center gap-[5px] overflow-hidden rounded-[2px] border px-2 text-left whitespace-nowrap";
const TASK_IDLE = "border-[#a5a5b8] bg-linear-to-b from-white via-[#e8e8ef] to-[#c6c7d6] text-[#33333c]";

const Network = () => (
	<Icon>
		<path fill="#20285a" stroke="#9aa4d8" d="M6.500 1.500h8v6h-8z" />
		<path fill="#20285a" stroke="#9aa4d8" d="M1.500 5.500h8v6h-8z" />
		<path fill="#a8b4dc" stroke="#6e7cb0" d="M3.500 12.500h9v2h-9z" />
	</Icon>
);

const Taskbar = () => (
	<footer className="absolute inset-x-0 bottom-0 flex h-[34px] items-stretch border-t-2 border-[#d5d4e0] bg-linear-to-b from-[#9594ad] via-[#c9c9d2] to-[#e6e6ea] pt-[2px]">
		<button
			type="button"
			className="flex w-[98px] items-center gap-[7px] rounded-r-[10px] border-r-2 border-[#2d6b2c] bg-linear-to-b from-[#7cc574] via-[#3d9a3b] to-[#2f822e] pl-[10px]"
		>
			<svg width="18" height="20" viewBox="0 0 18 20" aria-hidden="true">
				<path fill="#ee5a2c" d="M3 2q3-2 6 0L7.500 9q-3-2-6 0z" />
				<path fill="#8bd13c" d="M10 2.500q3 2 7 0L15.500 9.500q-4 2-7 0z" />
				<path fill="#5a8ce8" d="M1.500 10q3-2 6 0L6 17q-3-2-6 0z" />
				<path fill="#f8cc30" d="M8.300 10.500q3 2 7 0L14 17.500q-4 2-7 0z" />
			</svg>
			<span className="font-['Liberation_Sans',Arial,sans-serif] text-[18px] font-bold text-white italic text-shadow-md">пуск</span>
		</button>
		<div className="my-[5px] mr-[7px] ml-[10px] w-[3px] border-r-2 border-dotted border-[#85859a]" />
		<div className="flex flex-1 items-center gap-[2px]">
			<button type="button" className={clsx(TASK, TASK_IDLE)}>
				<Icon>
					<circle cx="8" cy="8" r="7.500" fill="#e8651c" stroke="none" />
					<circle cx="8.500" cy="6.500" r="4.500" fill="#2c5a9c" stroke="none" />
					<path fill="#f8a92c" stroke="none" d="M1 5q1 1 3 1 0 5 5 5 4 0 6-4 0 8-7 8T1 5z" />
				</Icon>
				Режимы просмотра ...
			</button>
			<button type="button" className={clsx(TASK, TASK_IDLE)}>
				<span className="flex h-[15px] w-4 shrink-0 items-center justify-center bg-[#0a4a80] text-[9px] font-bold text-[#8fd0ff]">Ps</span>
				Untitled-3 @ 66,7% (...
			</button>
			<button type="button" className={clsx(TASK, "border-[#5c5c70] bg-linear-to-b from-[#6d6d82] to-[#85859a] text-white")}>
				<CorelLogo size={16} />
				CorelDRAW X6 - [Unti...
			</button>
			<button type="button" className={clsx(TASK, TASK_IDLE)}>
				<span className="flex h-[15px] w-4 shrink-0 items-center justify-center rounded-[2px] border border-[#2a5aa8] bg-white text-[11px] font-bold text-[#2a5aa8]">W</span>
				Doc1_Selection.docx ...
			</button>
		</div>
		<div className="my-[5px] mr-2 w-[3px] border-r-2 border-dotted border-[#85859a]" />
		<div className="flex items-center">
			<span className="bg-[#b9b9c6] px-px">RU</span>
			<span className="ml-[7px] flex h-[14px] w-[14px] items-center justify-center rounded-[2px] border border-black bg-[#ffffd8] text-[11px] font-bold">?</span>
			<svg width="9" height="18" className="mr-[15px] ml-3" fill="none" stroke="#000" aria-hidden="true">
				<path d="M2.500 2.500v-2h6v4h-2M.500 2.500h6v3h-6z" />
				<path fill="#000" stroke="none" d="M1 13h6l-3 3z" />
			</svg>
			<div className="relative flex h-full w-[111px] items-center gap-[2px] border-l border-[#77778a] bg-linear-to-b from-[#f2f2f8] via-[#d0d0de] to-[#bbbbd0] pl-[10px]">
				<button type="button" aria-label="Show hidden icons" className="absolute -left-[10px] flex h-[18px] w-[18px] items-center justify-center rounded-full border border-[#9a9aac] bg-linear-to-b from-[#b5b5c4] to-[#77778c]">
					<svg width="7" height="9" viewBox="0 0 7 9" fill="none" stroke="#fff" strokeWidth="2" aria-hidden="true"><path d="M5.500 .5L1.500 4.500l4 4" /></svg>
				</button>
				<Network />
				<Network />
				<Icon>
					<path fill="#d9262c" stroke="#a8a8b8" d="M8 .500l6.500 2q0 9-6.500 13-6.500-4-6.500-13z" />
					<path stroke="#fff" strokeWidth="2" d="M5 4.500l6 6M11 4.500l-6 6" />
				</Icon>
				<time className="ml-1">16:16</time>
			</div>
		</div>
	</footer>
);

const App = () => (
	<main className="relative h-screen overflow-hidden bg-black font-['DejaVu_Sans_Condensed','Noto_Sans',sans-serif] text-[11px] leading-[14px] text-black">
		<ul className="w-5 pt-[31px] text-white">
			{DESKTOP_LABELS.map((lines, i) => (
				<li key={i} className="flex h-[68px] flex-col items-end">
					{lines.map((line) => (
						<span key={line}>{line}</span>
					))}
				</li>
			))}
		</ul>

		<BackWindow />

		<section className="absolute top-[5px] right-[91px] bottom-[66px] left-5 flex flex-col rounded-t-[7px] border-x-[5px] border-t border-b-[3px] border-[#d5d6e0] bg-[#e0dfe3]">
			<TitleBar />
			<MenuBar />
			<StandardToolbar />
			<PropertyBar />

			<div className="flex min-h-0 flex-1">
				<aside className="w-[29px] shrink-0 border-r border-[#b5b4b9] pt-[7px]" aria-label="Toolbox">
					{TOOLBOX.map(({ name, flyout, icon }, i) => (
						<button
							key={name}
							type="button"
							aria-label={name}
							className={clsx(
								"relative mb-[2px] ml-[2px] flex h-6 w-6 items-center justify-center",
								i === 0 && "rounded-[3px] border border-[#1a4a86] bg-linear-to-b from-[#bfc2d6] to-white",
							)}
						>
							<Icon>{icon}</Icon>
							{flyout && (
								<svg width="5" height="5" className="absolute right-px bottom-px" aria-hidden="true"><path d="M5 0v5H0z" /></svg>
							)}
						</button>
					))}
				</aside>

				<div className="flex w-[21px] shrink-0 flex-col border-r border-[#9a9aa6]">
					<div className="flex h-5 items-center justify-center">
						<svg width="11" height="11" fill="none" stroke="#000" strokeDasharray="2 1" aria-hidden="true">
							<path d="M0 1.500h10M2.500 0v10M3 3l7 7M10 6v4H6" />
						</svg>
					</div>
					<div className="relative flex-1 overflow-hidden"><VerticalRuler /></div>
				</div>

				<div className="flex min-w-0 flex-1 flex-col">
					<HorizontalRuler />
					<div className="flex min-h-0 flex-1">
						<div className="flex-1 bg-white" />
						<div className="flex w-[18px] flex-col items-center bg-white">
							<ScrollButton dir="up" />
							<div className="my-px flex w-[17px] flex-1 items-center justify-center rounded-[2px] border border-[#9496a8] bg-linear-to-r from-[#f6f6fa] to-[#c9cad9]">
								<span className="h-2 w-[6px] bg-[repeating-linear-gradient(180deg,#8a8a9c_0_1px,#fff_1px_2px)]" />
							</div>
							<ScrollButton dir="down" />
						</div>
					</div>
					<PageBar />
				</div>

				<div className="ml-[2px] flex w-5 shrink-0 flex-col items-center border-x border-l-white border-r-[#b5b4b9]">
					<PaletteHead muted />
					<div className="mt-[2px]"><ScrollButton dir="up" muted /></div>
					<div className="my-px"><NoColor /></div>
					<div className="w-[18px] border-x border-[#55555c] bg-[#55555c]">
						{PALETTE.map((color, i) => (
							<div key={i} className="h-[17px] border-b border-[#55555c]" style={{ backgroundColor: color }} />
						))}
					</div>
					<div className="mt-px"><ScrollButton dir="down" /></div>
					<svg width="8" height="10" className="mt-[3px]" aria-hidden="true"><path d="M0 0h2v10H0zM8 0v10L3 5z" /></svg>
				</div>
				<div className="flex w-[19px] shrink-0 flex-col items-center border-l border-white">
					<PaletteHead />
					<div className="mt-[2px] w-full flex-1 bg-white pl-px"><NoColor /></div>
					<div className="h-3" />
				</div>
			</div>

			<StatusBar />
		</section>

		<div className="pointer-events-none absolute top-[5px] right-[92px] bottom-[66px] left-[19px] flex items-center justify-center">
			<div className="pointer-events-auto">
				<OptionsDialog />
			</div>
		</div>

		<Taskbar />
	</main>
);

export default App;
